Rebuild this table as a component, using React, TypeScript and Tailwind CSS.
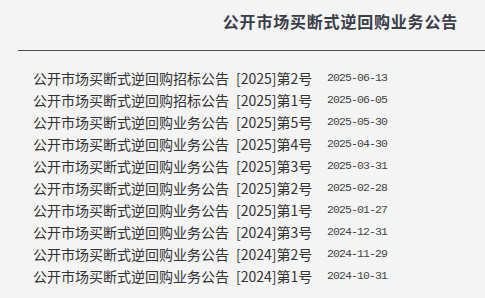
const notices = [
	{ title: '公开市场买断式逆回购招标公告', no: '[2025]第2号', date: '2025-06-13' },
	{ title: '公开市场买断式逆回购招标公告', no: '[2025]第1号', date: '2025-06-05' },
	{ title: '公开市场买断式逆回购业务公告', no: '[2025]第5号', date: '2025-05-30' },
	{ title: '公开市场买断式逆回购业务公告', no: '[2025]第4号', date: '2025-04-30' },
	{ title: '公开市场买断式逆回购业务公告', no: '[2025]第3号', date: '2025-03-31' },
	{ title: '公开市场买断式逆回购业务公告', no: '[2025]第2号', date: '2025-02-28' },
	{ title: '公开市场买断式逆回购业务公告', no: '[2025]第1号', date: '2025-01-27' },
	{ title: '公开市场买断式逆回购业务公告', no: '[2024]第3号', date: '2024-12-31' },
	{ title: '公开市场买断式逆回购业务公告', no: '[2024]第2号', date: '2024-11-29' },
	{ title: '公开市场买断式逆回购业务公告', no: '[2024]第1号', date: '2024-10-31' },
]

export default function App() {
	return (
		<div className="h-[298px] w-[485px] overflow-hidden bg-[#f4f4f5] font-['Noto_Sans_CJK_SC',sans-serif]">
			<div className="flex h-[50px] items-center justify-end pt-[1px] pr-[27px] pb-[9px]">
				<h1 className="font-bold text-[16px] text-[#3a3e48] tracking-[0.8px] leading-none">
					公开市场买断式逆回购业务公告
				</h1>
			</div>
			<div className="ml-[18px] h-px bg-[#4a4e56]" />
			<ul className="mt-[16px] pl-[33px]">
				{notices.map(item => (
					<li key={item.date} className="flex h-[22px] items-center">
						<span className="flex w-[294px] text-[14px] text-[#333] leading-none">
							<span>{item.title}</span>
							<span className="ml-[7px]">{item.no}</span>
						</span>
						<span className="font-['Liberation_Mono',monospace] text-[11.5px] text-[#444] tracking-[-0.9px] leading-none">
							{item.date}
						</span>
					</li>
				))}
			</ul>
		</div>
	)
}
